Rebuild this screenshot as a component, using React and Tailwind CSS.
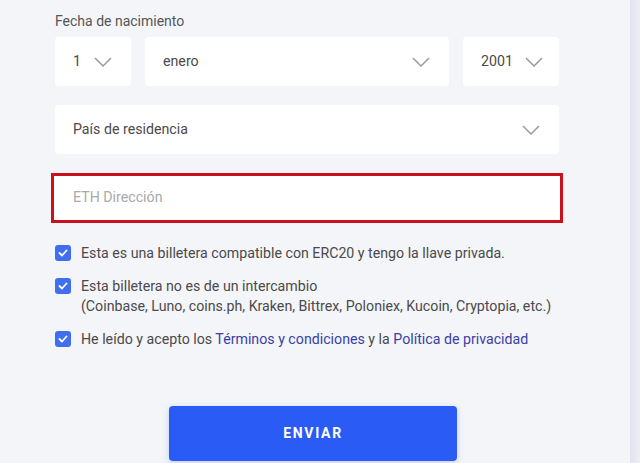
const Chevron = () => (
  <svg width="18" height="10" viewBox="0 0 18 10" fill="none" className="shrink-0">
    <path d="M1 1l8 8 8-8" stroke="#9a9a9a" strokeWidth="1.5" />
  </svg>
);

const Check = () => (
  <span className="mt-[2px] flex h-[16px] w-[16px] shrink-0 items-center justify-center rounded-[3px] bg-[#3f6ff0]">
    <svg width="10" height="8" viewBox="0 0 10 8" fill="none">
      <path d="M1.5 4l2.5 2.5L8.5 1.5" stroke="white" strokeWidth="1.8" strokeLinecap="round" strokeLinejoin="round" />
    </svg>
  </span>
);

function Select({ value, className, gap }) {
  return (
    <div className={`flex h-[49px] items-center rounded-[4px] bg-white pl-[18px] pr-[19px] ${className}`}>
      <span className={gap}>{value}</span>
      <Chevron />
    </div>
  );
}

export default function App() {
  return (
    <div
      className="flex h-[463px] w-[640px] overflow-hidden bg-[#f4f5f9] text-[14.2px] text-[#4a4a4a]"
      style={{ fontFamily: 'Roboto, "Noto Sans", sans-serif' }}
    >
      <div className="w-[630px] pl-[55px] pt-[12px]">
        <div className="w-[504px]">
          <p className="text-[14px] leading-[18px] text-[#555]">Fecha de nacimiento</p>

          <div className="mt-[7px] flex gap-[14px]">
            <Select value="1" gap="mr-[13px]" className="w-[76px]" />
            <Select value="enero" gap="flex-1" className="w-[304px]" />
            <Select value="2001" gap="mr-[12px]" className="w-[96px]" />
          </div>

          <Select value="País de residencia" gap="flex-1" className="mt-[19px] w-[504px]" />

          <div className="-mx-[4px] mt-[19px] flex h-[50px] items-center border-[3px] border-[#cc0f1c] bg-white pl-[19px] text-[#a9a9a9]">
            ETH Dirección
          </div>

          <div className="mt-[20px] flex flex-col gap-[13px] whitespace-nowrap leading-[20px]">
            <label className="flex gap-[10px]">
              <Check />
              <span>Esta es una billetera compatible con ERC20 y tengo la llave privada.</span>
            </label>
            <label className="flex gap-[10px]">
              <Check />
              <span>
                Esta billetera no es de un intercambio
                <br />
                (Coinbase, Luno, coins.ph, Kraken, Bittrex, Poloniex, Kucoin, Cryptopia, etc.)
              </span>
            </label>
            <label className="flex gap-[10px]">
              <Check />
              <span>
                He leído y acepto los <span className="text-[#3a3fa6]">Términos y condiciones</span> y la{' '}
                <span className="text-[#3a3fa6]">Política de privacidad</span>
              </span>
            </label>
          </div>

          <div className="mt-[57px] flex justify-center pl-[12px]">
            <button className="h-[55px] w-[288px] rounded-[4px] bg-[#2a5cf5] text-[14px] font-bold tracking-[0.12em] text-white shadow-[0_2px_6px_rgba(42,92,245,0.25)]">
              ENVIAR
            </button>
          </div>
        </div>
      </div>
      <div className="flex-1 bg-gradient-to-r from-[#e2e3ee] to-[#eceef5]" />
    </div>
  );
}
